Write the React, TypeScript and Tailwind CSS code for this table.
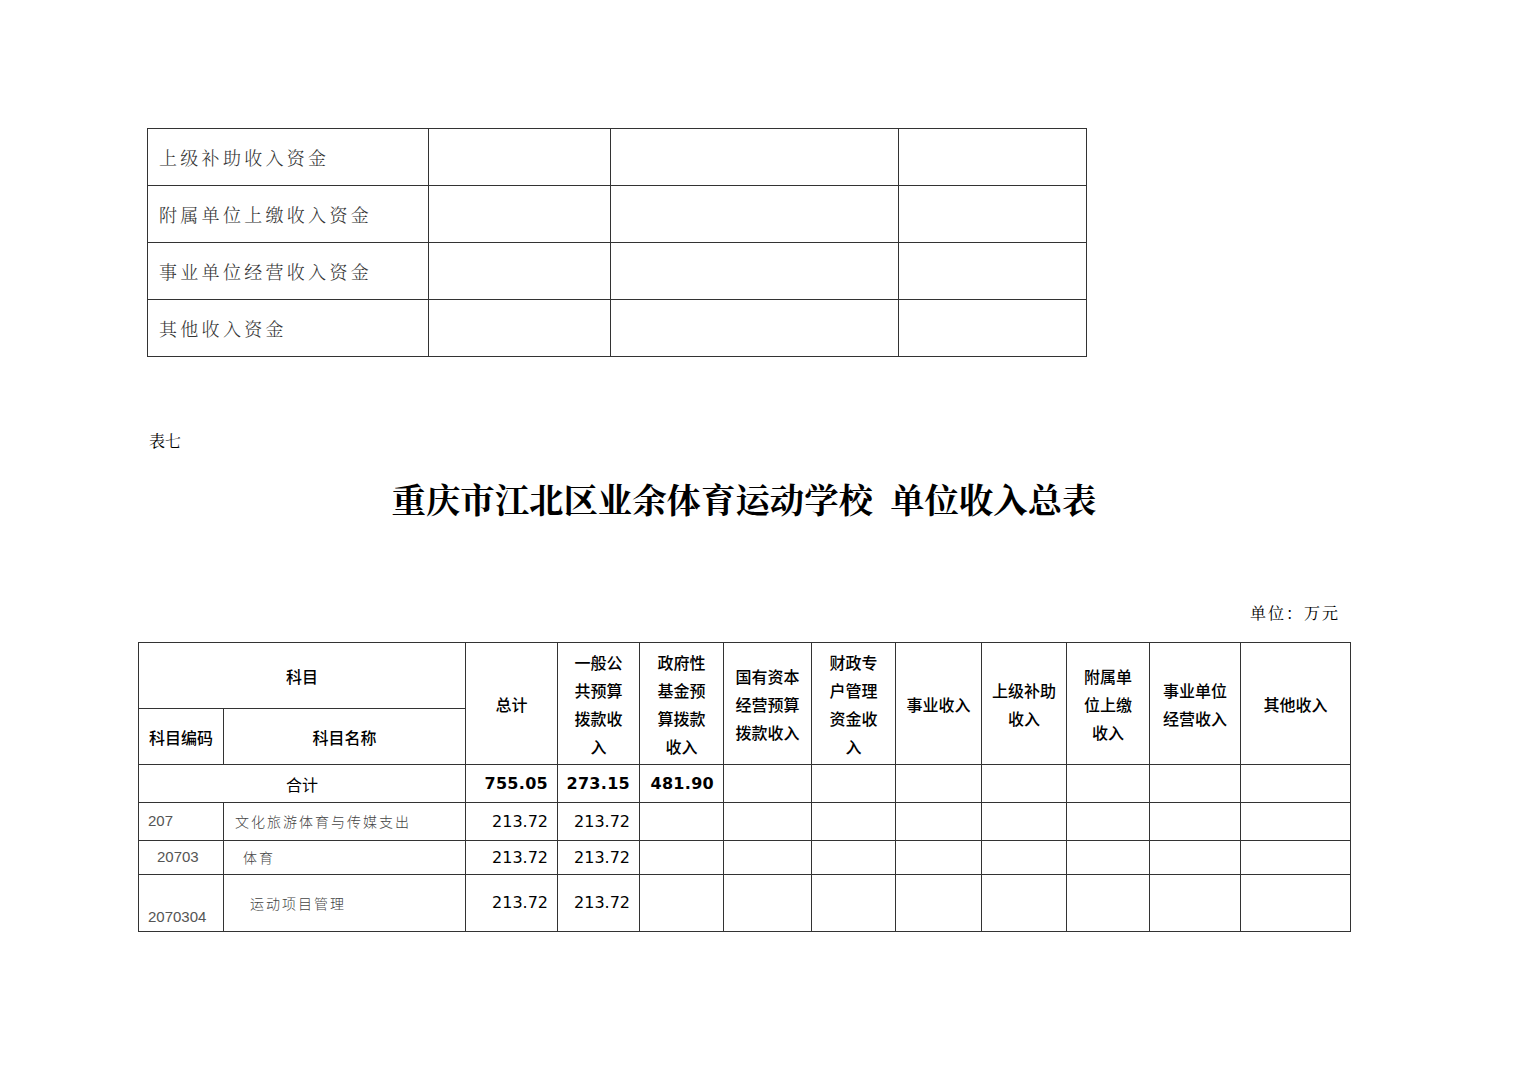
const serif = "font-['Noto_Serif_CJK_SC','Noto_Sans_CJK_SC',serif]";
const cjk = "font-['Noto_Sans_CJK_SC',sans-serif]";

const topRows = ["上级补助收入资金", "附属单位上缴收入资金", "事业单位经营收入资金", "其他收入资金"];

const headCols: string[][] = [
  ["一般公", "共预算", "拨款收", "入"],
  ["政府性", "基金预", "算拨款", "收入"],
  ["国有资本", "经营预算", "拨款收入"],
  ["财政专", "户管理", "资金收", "入"],
  ["事业收入"],
  ["上级补助", "收入"],
  ["附属单", "位上缴", "收入"],
  ["事业单位", "经营收入"],
  ["其他收入"],
];

const widths = [85, 242, 92, 82, 84, 88, 84, 86, 85, 83, 91, 110];

const bodyRows = [
  { code: "207", codeCls: "pl-[9px] align-middle", name: "文化旅游体育与传媒支出", namePad: "pl-[11px]", h: "h-[38px]" },
  { code: "20703", codeCls: "pl-[18px] align-middle", name: "体育", namePad: "pl-[19px]", h: "h-[34px]" },
  { code: "2070304", codeCls: "pl-[9px] align-bottom pb-[3px]", name: "运动项目管理", namePad: "pl-[26px]", h: "h-[57px]" },
];

function Empty({ n }: { n: number }) {
  return (
    <>
      {Array.from({ length: n }).map((_, i) => (
        <td key={i} className="border border-[#333]" />
      ))}
    </>
  );
}

export default function App() {
  return (
    <div className="w-[1520px] min-h-[1074px] bg-white pt-[128px] text-black">
      <table className="ml-[147px] w-[939px] table-fixed border-collapse">
        <colgroup>
          <col className="w-[281px]" />
          <col className="w-[182px]" />
          <col className="w-[288px]" />
          <col className="w-[188px]" />
        </colgroup>
        <tbody>
          {topRows.map((r) => (
            <tr key={r} className="h-[57px]">
              <td className={`border border-[#333] pl-[11px] text-[18px] font-light tracking-[3.3px] text-[#333] ${serif}`}>
                {r}
              </td>
              <Empty n={3} />
            </tr>
          ))}
        </tbody>
      </table>

      <div className={`ml-[149px] mt-[74px] text-[16px] leading-[20px] ${serif}`}>表七</div>

      <div className="ml-[138px] w-[1212px]">
        <h1 className={`mt-[27px] text-center text-[34.4px] font-bold leading-[40px] ${serif}`}>
          重庆市江北区业余体育运动学校&nbsp;&nbsp;单位收入总表
        </h1>
        <div className={`mt-[85px] pr-[10px] text-right text-[16px] leading-[20px] tracking-[2px] ${serif}`}>单位：万元</div>
      </div>

      <table className={`ml-[138px] mt-[19px] w-[1212px] table-fixed border-collapse text-[16px] ${cjk}`}>
        <colgroup>
          {widths.map((w, i) => (
            <col key={i} style={{ width: w }} />
          ))}
        </colgroup>
        <thead>
          <tr className="h-[66px]">
            <th colSpan={2} className="border border-[#333] font-medium">科目</th>
            <th rowSpan={2} className="border border-[#333] font-medium">总计</th>
            {headCols.map((lines, i) => (
              <th key={i} rowSpan={2} className="border border-[#333] font-medium leading-[28px]">
                {lines.map((l, j) => (
                  <div key={j}>{l}</div>
                ))}
              </th>
            ))}
          </tr>
          <tr className="h-[56px]">
            <th className="border border-[#333] font-medium">科目编码</th>
            <th className="border border-[#333] font-medium">科目名称</th>
          </tr>
        </thead>
        <tbody className="font-['DejaVu_Sans',sans-serif] text-[16px]">
          <tr className="h-[38px]">
            <td colSpan={2} className={`border border-[#333] text-center text-[16px] ${cjk}`}>合计</td>
            <td className="border border-[#333] pr-[9px] text-right font-bold tracking-[0.3px]">755.05</td>
            <td className="border border-[#333] pr-[9px] text-right font-bold tracking-[0.3px]">273.15</td>
            <td className="border border-[#333] pr-[9px] text-right font-bold tracking-[0.3px]">481.90</td>
            <Empty n={7} />
          </tr>
          {bodyRows.map((r) => (
            <tr key={r.code} className={r.h}>
              <td className={`border border-[#333] font-['Liberation_Sans',sans-serif] text-[15px] text-[#555] ${r.codeCls}`}>
                {r.code}
              </td>
              <td className={`border border-[#333] font-light tracking-[2px] text-[14px] text-[#444] ${cjk} ${r.namePad}`}>
                {r.name}
              </td>
              <td className="border border-[#333] pr-[9px] text-right">213.72</td>
              <td className="border border-[#333] pr-[9px] text-right">213.72</td>
              <Empty n={8} />
            </tr>
          ))}
        </tbody>
      </table>
    </div>
  );
}
